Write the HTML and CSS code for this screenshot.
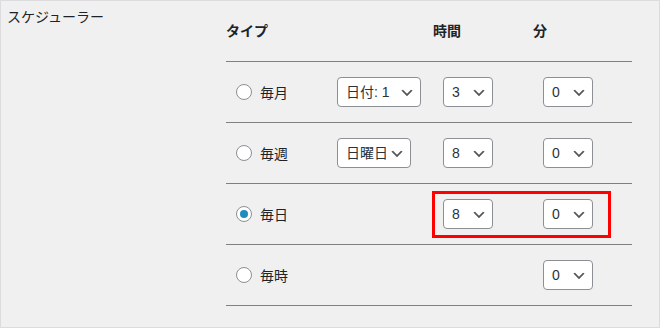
FILE: index.html
```html
<!DOCTYPE html>
<html lang="ja">

<head>
  <meta charset="UTF-8">
  <meta name="viewport" content="width=device-width, initial-scale=1.0">
  <title>スケジューラー</title>
  <link rel="stylesheet" href="styles.css">
</head>

<body>
  <div class="panel">
    <div class="panel-title">スケジューラー</div>

    <div class="schedule">
      <div class="schedule-row schedule-head">
        <div class="head-type">タイプ</div>
        <div>時間</div>
        <div>分</div>
      </div>

      <div class="schedule-row">
        <label class="cell freq"><input type="radio" name="freq" value="monthly"> 毎月</label>
        <div class="cell"><select class="sel sel-date"><option>日付: 1</option></select></div>
        <div class="cell"><select class="sel"><option>3</option></select></div>
        <div class="cell"><select class="sel"><option>0</option></select></div>
      </div>

      <div class="schedule-row">
        <label class="cell freq"><input type="radio" name="freq" value="weekly"> 毎週</label>
        <div class="cell"><select class="sel sel-week"><option>日曜日</option></select></div>
        <div class="cell"><select class="sel"><option>8</option></select></div>
        <div class="cell"><select class="sel"><option>0</option></select></div>
      </div>

      <div class="schedule-row">
        <label class="cell freq"><input type="radio" name="freq" value="daily" checked> 毎日</label>
        <div class="cell"></div>
        <div class="cell"><select class="sel"><option>8</option></select></div>
        <div class="cell"><select class="sel"><option>0</option></select></div>
        <!-- highlight box -->
        <div class="highlight"></div>
      </div>

      <div class="schedule-row">
        <label class="cell freq"><input type="radio" name="freq" value="hourly"> 毎時</label>
        <div class="cell"></div>
        <div class="cell"></div>
        <div class="cell"><select class="sel"><option>0</option></select></div>
      </div>
    </div>
  </div>
</body>

</html>
```

FILE: styles.css
```css
body {
  margin: 0;
  font-family: "Liberation Sans", "Noto Sans CJK JP", sans-serif;
  font-size: 14px;
  color: #1d2327;
}

.panel {
  display: flex;
  width: 660px;
  height: 328px;
  box-sizing: border-box;
  border: 1px solid #dcdcde;
  background-color: #f0f0f1;
}

.panel-title {
  width: 225px;
  padding: 6px 6px;
  box-sizing: border-box;
  line-height: 20px;
}

.schedule {
  width: 406px;
}

.schedule-row {
  position: relative;
  display: grid;
  grid-template-columns: 101px 106px 100px 99px;
  height: 60px;
  border-bottom: 1px solid #808080;
}

.schedule-head {
  height: 20px;
  padding: 20px 0;
  line-height: 20px;
  font-weight: bold;
}

.head-type {
  grid-column: span 2;
}

.cell {
  display: flex;
  align-items: center;
  padding-left: 10px;
}

.freq {
  gap: 8px;
  cursor: pointer;
}

.freq input {
  appearance: none;
  width: 16px;
  height: 16px;
  margin: 0;
  border: 1px solid #8c8f94;
  border-radius: 50%;
  background-color: #fff;
  box-sizing: border-box;
  display: flex;
  align-items: center;
  justify-content: center;
}

.freq input:checked::before {
  content: "";
  width: 8px;
  height: 8px;
  border-radius: 50%;
  background-color: #1e8cbe;
}

.sel {
  appearance: none;
  width: 50px;
  height: 30px;
  margin: 0;
  padding: 0 24px 0 8px;
  border: 1px solid #8c8f94;
  border-radius: 4px;
  font-family: inherit;
  font-size: 14px;
  color: #2c3338;
  background: #fff url("data:image/svg+xml;charset=utf-8,%3Csvg xmlns='http://www.w3.org/2000/svg' viewBox='0 0 20 20'%3E%3Cpath d='M5 6l5 5 5-5 2 1-7 7-7-7 2-1z' fill='%23555'/%3E%3C/svg%3E") no-repeat right 5px top 55%;
  background-size: 16px 16px;
}

.sel-date {
  width: 84px;
}

.sel-week {
  width: 74px;
}

.highlight {
  position: absolute;
  left: 206px;
  top: 7px;
  width: 179px;
  height: 47px;
  box-sizing: border-box;
  border: 3px solid #f00;
}
```
